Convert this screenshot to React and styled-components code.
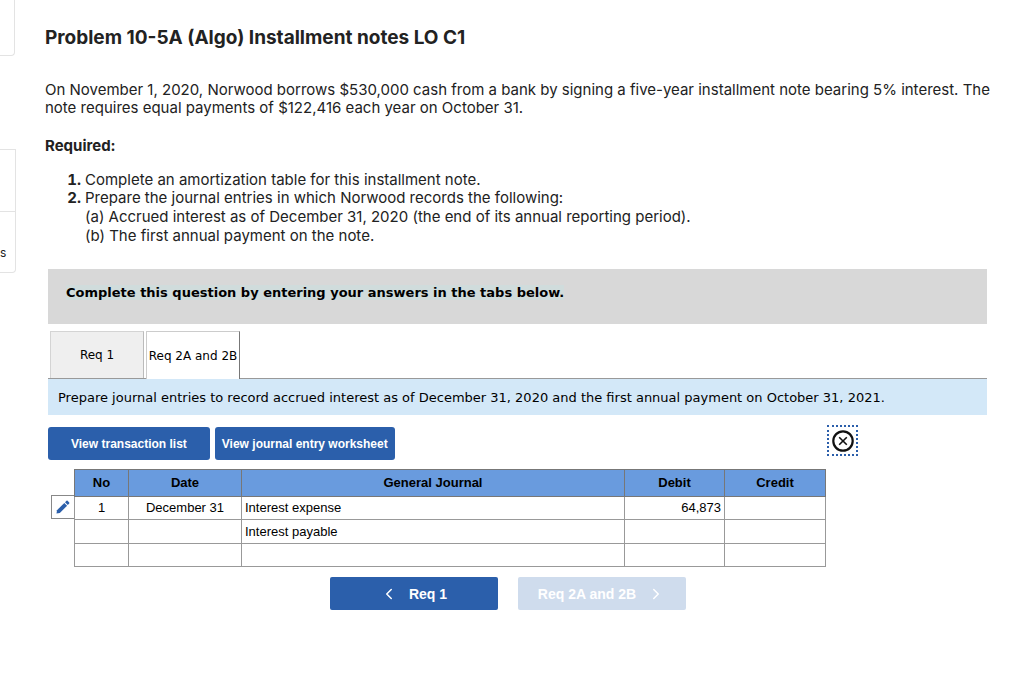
import React, { useState } from 'react'
import styled, { createGlobalStyle } from 'styled-components'
import { ChevronLeft, ChevronRight } from 'lucide-react'


const ENTRIES = [
  { no: '1', date: 'December 31', account: 'Interest expense', debit: '64,873', credit: '' },
  { no: '', date: '', account: 'Interest payable', debit: '', credit: '' },
  { no: '', date: '', account: '', debit: '', credit: '' },
]

const TABS = ['Req 1', 'Req 2A and 2B']

export default function App() {
  const [active, setActive] = useState(1)

  return (
    <Page>
      <GlobalStyle />
      <Sidebar>
        <SideCard $first />
        <SideCard>
          <SideItem />
          <SideItem>s</SideItem>
        </SideCard>
      </Sidebar>
      <Main>
        <Problem>
          <Title>Problem 10-5A (Algo) Installment notes LO C1</Title>
          <p>
            On November 1, 2020, Norwood borrows $530,000 cash from a bank by signing a five-year
            installment note bearing 5% interest. The note requires equal payments of $122,416 each
            year on October 31.
          </p>
          <Subtitle>Required:</Subtitle>
          <Steps>
            <li>Complete an amortization table for this installment note.</li>
            <li>
              Prepare the journal entries in which Norwood records the following:
              <div>(a) Accrued interest as of December 31, 2020 (the end of its annual reporting period).</div>
              <div>(b) The first annual payment on the note.</div>
            </li>
          </Steps>
        </Problem>

        <Question>
          <Banner><mark>Complete this question by entering your answers in the tabs below.</mark></Banner>
          <TabList role="tablist">
            {TABS.map((label, i) => (
              <Tab
                key={label}
                role="tab"
                aria-selected={i === active}
                $active={i === active}
                onClick={() => setActive(i)}
              >
                {label}
              </Tab>
            ))}
          </TabList>
          <Instruction>
            Prepare journal entries to record accrued interest as of December 31, 2020 and the first
            annual payment on October 31, 2021.
          </Instruction>

          <Worksheet>
            <Toolbar>
              <ViewButton $pad={23}>View transaction list</ViewButton>
              <ViewButton $pad={7}>View journal entry worksheet</ViewButton>
              <CloseButton aria-label="Close">
                <CloseIcon />
              </CloseButton>
            </Toolbar>
            <TableRow>
              <EditButton aria-label="Edit entry 1">
                <PencilIcon />
              </EditButton>
              <Journal>
                <colgroup>
                  <Col $w="54px" />
                  <Col $w="113px" />
                  <Col />
                  <Col $w="100px" />
                  <Col $w="101px" />
                </colgroup>
                <thead>
                  <tr>
                    <th>No</th>
                    <th>Date</th>
                    <th>General Journal</th>
                    <th>Debit</th>
                    <th>Credit</th>
                  </tr>
                </thead>
                <tbody>
                  {ENTRIES.map((entry, i) => (
                    <tr key={i}>
                      <Cell $align="center">{entry.no}</Cell>
                      <Cell $align="center">{entry.date}</Cell>
                      <Cell>{entry.account}</Cell>
                      <Cell $align="right">{entry.debit}</Cell>
                      <Cell $align="right">{entry.credit}</Cell>
                    </tr>
                  ))}
                </tbody>
              </Journal>
            </TableRow>
          </Worksheet>

          <Pager>
            <PagerButton onClick={() => setActive(0)}>
              <ChevronLeft size={18} />
              Req 1
            </PagerButton>
            <PagerButton disabled>
              Req 2A and 2B
              <ChevronRight size={18} />
            </PagerButton>
          </Pager>
        </Question>
      </Main>
    </Page>
  )
}

function CloseIcon() {
  return (
    <svg width="22" height="22" viewBox="0 0 22 22" fill="none" stroke="#111">
      <circle cx="11" cy="11" r="9.7" strokeWidth="2.2" />
      <path d="M7.2 7.2l7.6 7.6M14.8 7.2l-7.6 7.6" strokeWidth="1.6" />
    </svg>
  )
}

function PencilIcon() {
  return (
    <svg width="14" height="14" viewBox="0 0 14 14" fill="#2b5fab">
      <path d="M0.5 13.5L1 10.2L8.3 2.9L11.1 5.7L3.8 13Z" />
      <path d="M9 2.2L10.5 0.8Q11 0.3 11.6 0.8L13.2 2.4Q13.7 3 13.2 3.5L11.8 5Z" />
    </svg>
  )
}

const GlobalStyle = createGlobalStyle`
  * {
    box-sizing: border-box;
  }

  body {
    margin: 0;
    background: #fff;
    color: #222;
  }

  button {
    font: inherit;
    cursor: pointer;
  }
`

const Page = styled.div`
  display: flex;
  min-height: 100vh;
`

const Sidebar = styled.aside`
  flex: 0 0 16px;
  display: flex;
  flex-direction: column;
  gap: 93px;
`

const SideCard = styled.div`
  border: 1px solid #e3e3e3;
  border-width: ${props => (props.$first ? '0 1px 1px 0' : '1px 1px 1px 0')};
  border-radius: 0 0 4px 0;
  min-height: ${props => (props.$first ? '56px' : '0')};
  margin-right: ${props => (props.$first ? '1px' : '0')};
`

const SideItem = styled.div`
  height: 61px;
  padding-top: 33px;
  font: 12px/16px Inter, sans-serif;

  & + & {
    border-top: 1px solid #e3e3e3;
  }
`

const Main = styled.main`
  flex: 1;
  min-width: 0;
  padding: 26px 32px 32px 29px;
`

const Problem = styled.section`
  font: 15px/18px Inter, sans-serif;

  p {
    margin: 31px 0 20px;
  }
`

const Title = styled.h1`
  margin: 0;
  font-size: 19px;
  line-height: 24px;
`

const Subtitle = styled.h2`
  margin: 0 0 16px;
  font-size: 15px;
  line-height: 18px;
`

const Steps = styled.ol`
  margin: 0;
  padding-left: 40px;

  li::marker {
    font-weight: bold;
  }

  div {
    padding-top: 1px;
  }
`

const Question = styled.section`
  margin: 24px 5px 0 3px;
  font: 13px/16px 'DejaVu Sans', Verdana, sans-serif;
  color: #000;
`

const Banner = styled.div`
  padding: 16px 18px 23px;
  font-weight: bold;
  background: #d8d8d8;

  mark {
    background: #d0dcdc;
    color: inherit;
  }
`

const TabList = styled.div`
  display: flex;
  gap: 2px;
  margin-top: 7px;
  padding-left: 2px;
  border-bottom: 1px solid #999;
`

const Tab = styled.button`
  width: 94px;
  height: ${props => (props.$active ? '48px' : '47px')};
  padding: 0;
  font-size: 12px;
  white-space: nowrap;
  color: #000;
  background: ${props => (props.$active ? '#fff' : '#efefef')};
  border: 1px solid ${props => (props.$active ? '#ccc' : '#d4d4d4')};
  border-right-color: ${props => (props.$active ? '#777' : '#bbb')};
  border-bottom: 0;
  margin-bottom: ${props => (props.$active ? '-1px' : '0')};
`

const Instruction = styled.div`
  padding: 11px 10px 9px;
  background: #d3e8f8;
`

const Worksheet = styled.div`
  max-width: 810px;
  font-family: 'Liberation Sans', Arial, sans-serif;
`

const Toolbar = styled.div`
  display: flex;
  align-items: flex-start;
  gap: 5px;
  padding: 10px 0 9px;
`

const ViewButton = styled.button`
  height: 33px;
  margin-top: 2px;
  padding: 0 ${props => props.$pad}px;
  border: 0;
  border-radius: 3px;
  font-size: 12px;
  font-weight: bold;
  color: #fff;
  background: #2b5fab;
`

const CloseButton = styled.button`
  display: grid;
  place-items: center;
  width: 31px;
  height: 31px;
  margin-left: auto;
  padding: 0;
  background: none;
  border: 2px dotted #2b5fab;
`

const TableRow = styled.div`
  display: flex;
  align-items: flex-start;
  padding: 0 32px 0 3px;
`

const EditButton = styled.button`
  display: grid;
  place-items: center;
  flex: 0 0 23px;
  height: 24px;
  margin-top: 26px;
  padding: 0;
  background: #fff;
  border: 1px solid #888;
  border-right: 0;
`

const Journal = styled.table`
  flex: 1;
  table-layout: fixed;
  border-collapse: collapse;

  th {
    height: 27px;
    padding: 0 4px;
    background: #699bde;
    border: 1px solid #777;
  }
`

const Col = styled.col`
  width: ${props => props.$w || 'auto'};
`

const Cell = styled.td`
  height: 23px;
  padding: 0 3px;
  text-align: ${props => props.$align || 'left'};
  border: 1px solid #999;

  tr:nth-child(2) & {
    height: 24px;
  }
`

const Pager = styled.nav`
  display: flex;
  justify-content: center;
  gap: 20px;
  padding: 10px 20px 0 0;
  font-family: 'Liberation Sans', Arial, sans-serif;
`

const PagerButton = styled.button`
  display: flex;
  align-items: center;
  justify-content: center;
  gap: 11px;
  width: 168px;
  height: 33px;
  padding: 0;
  border: 0;
  border-radius: 2px;
  font-size: 14px;
  font-weight: bold;
  color: #fff;
  background: #2b5fab;

  &:disabled {
    background: #cfdced;
    cursor: default;
  }
`
